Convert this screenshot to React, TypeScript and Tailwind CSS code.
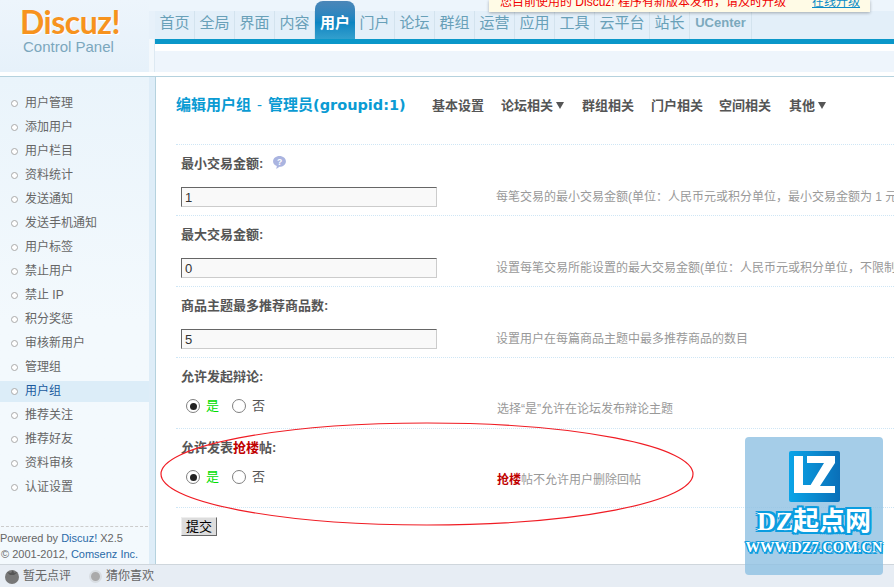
const cjk = "font-['Liberation_Sans','Noto_Sans_CJK_SC',sans-serif]";

const navItems = ["首页", "全局", "界面", "内容", "用户", "门户", "论坛", "群组", "运营", "应用", "工具"];
const sideItems = ["用户管理", "添加用户", "用户栏目", "资料统计", "发送通知", "发送手机通知", "用户标签", "禁止用户", "禁止 IP", "积分奖惩", "审核新用户", "管理组", "用户组", "推荐关注", "推荐好友", "资料审核", "认证设置"];
const tabs = [
  { label: "基本设置", w: "w-[69px]" },
  { label: "论坛相关", w: "w-[81px]", arrow: true },
  { label: "群组相关", w: "w-[69px]" },
  { label: "门户相关", w: "w-[68px]" },
  { label: "空间相关", w: "w-[70px]" },
  { label: "其他", w: "w-[40px]", arrow: true },
];

function NavLink({ label, active }: { label: string; active?: boolean }) {
  if (active) {
    return (
      <div className="w-[40px] h-[43px] -mt-[10px] rounded-t-[8px] bg-gradient-to-b from-[#4a86b8] via-[#0b85c2] to-[#3ba7d0] text-white font-bold flex items-start justify-center pt-[11px] text-[15px] leading-[22px]">
        {label}
      </div>
    );
  }
  return (
    <div className="w-[40px] h-[28px] border-r border-[#d3e3ee] text-[#68a0b8] text-center text-[15px] leading-[24px]">
      {label}
    </div>
  );
}

function Radio({ on }: { on?: boolean }) {
  return (
    <span className="w-[14px] h-[14px] rounded-full border-[1.5px] border-[#808080] bg-white flex items-center justify-center">
      {on && <span className="w-[7px] h-[7px] rounded-full bg-[#222]" />}
    </span>
  );
}

function InputRow({ label, value, desc, help }: { label: string; value: string; desc: string; help?: boolean }) {
  return (
    <div className="h-[71px] border-t border-dotted border-[#cfe6f5] pl-[5px] pt-[9px]">
      <div className="h-[19px] flex items-center text-[13px] font-bold text-[#555] leading-[19px]">
        {label}:
        {help && (
          <svg width="15" height="15" viewBox="0 0 14 14" className="ml-[9px] -mt-[3px]">
            <path d="M7 1c3.300 0 6 2.200 6 5s-2.700 5-6 5l-3 2 .5-2.700C2.400 9.500 1 8 1 6c0-2.800 2.700-5 6-5z" fill="#aab4e0" />
            <text x="7" y="9" fontSize="8" fontWeight="700" fill="#fff" textAnchor="middle">?</text>
          </svg>
        )}
      </div>
      <div className="mt-[14px] flex items-center h-[20px]">
        <div className="w-[256px] h-[20px] shrink-0 bg-[#f9f9f9] border-t border-l border-t-[#666] border-l-[#666] border-r border-b border-r-[#ccc] border-b-[#ccc] px-[3px] text-[13px] leading-[19px] text-[#333]">
          {value}
        </div>
        <div className="ml-[59px] w-[398px] overflow-hidden text-[12px] text-[#999] whitespace-nowrap">{desc}</div>
      </div>
    </div>
  );
}

function RadioRow({ label, desc, h }: { label: React.ReactNode; desc: React.ReactNode; h: string }) {
  return (
    <div className={`${h} border-t border-dotted border-[#cfe6f5] pl-[5px] pt-[9px]`}>
      <div className="h-[19px] flex items-center text-[13px] font-bold text-[#555] leading-[19px]">{label}:</div>
      <div className="mt-[10px] flex items-center h-[20px]">
        <div className="w-[316px] flex items-center pl-[5px] text-[13px] shrink-0">
          <Radio on />
          <span className="ml-[6px] w-[21px] text-[#00dd00]">是</span>
          <span className="ml-[5px]"><Radio /></span>
          <span className="ml-[6px] text-[#555]">否</span>
        </div>
        <div className="mt-[6px] text-[12px] text-[#999] whitespace-nowrap">{desc}</div>
      </div>
    </div>
  );
}

export default function App() {
  return (
    <div className={`${cjk} relative w-[894px] h-[587px] overflow-hidden bg-white flex flex-col`}>
      {/* top header */}
      <div className="h-[77px] shrink-0 flex border-b border-[#b5d2de] bg-white">
        <div className="w-[149px] h-[72px] shrink-0 bg-gradient-to-b from-[#edf5fc] to-[#e6f1fa] pl-[20px] pt-[5px]">
          <div className="w-fit text-[32px] leading-[34px] font-bold font-['Lato',sans-serif] text-[#f7931e] [text-shadow:1px_1px_0_#fff] tracking-[-0.5px]">Discuz!</div>
          <div className="text-[15px] leading-[16px] text-[#7ba7bd] pl-[3px]">Control Panel</div>
        </div>
        <div className="flex-1 min-w-0 flex flex-col">
          <div className="h-[11px] shrink-0 bg-[#edf5fc]" />
          <div className="h-[28px] shrink-0 bg-[#e3eff9] flex">
            <div className="w-[6px] h-full bg-[#e7f1fa]" />
            <div className="flex h-[28px]">
              {navItems.map((n) => (
                <NavLink key={n} label={n} active={n === "用户"} />
              ))}
              <div className="w-[55px] h-[28px] border-r border-[#d3e3ee] text-[#68a0b8] text-center text-[15px] leading-[24px]">云平台</div>
              <div className="w-[40px] h-[28px] border-r border-[#d3e3ee] text-[#68a0b8] text-center text-[15px] leading-[24px]">站长</div>
              <div className="w-[62px] h-[28px] border-r border-[#d3e3ee] text-[#7ba9bd] text-center text-[13px] font-bold leading-[24px]">UCenter</div>
            </div>
          </div>
          <div className="flex h-[33px]">
            <div className="w-[6px] bg-[#f3f8fc] border-r border-[#dde9f2]" />
            <div className="flex-1 flex flex-col">
              <div className="h-[5px] bg-[#0a97c9]" />
              <div className="h-[7px] bg-white" />
              <div className="flex-1 bg-[#eef5fc]" />
            </div>
          </div>
        </div>
      </div>

      {/* body */}
      <div className="flex-1 min-h-0 flex">
        <div className="w-[149px] shrink-0 bg-gradient-to-b from-[#eaf4fb] via-[#f3f9fd] to-[#f3f9fd] flex flex-col pt-[14px] relative">
          {sideItems.map((s) => (
            <div key={s} className="h-[24px] flex items-center">
              <div className={`w-full h-[21px] flex items-center pl-[11px] text-[12px] ${s === "用户组" ? "bg-[#dcedf8] text-[#1a5a9e]" : "text-[#666]"}`}>
                <span className="w-[7px] h-[7px] rounded-full border border-[#aaa] bg-white mr-[7px]" />
                {s}
              </div>
            </div>
          ))}
          <div className="mt-auto border-t border-dashed border-[#ccc] mx-[1px] pt-[3px] pb-[2px] text-[11px] leading-[16px] text-[#666] whitespace-nowrap">
            <div className="-ml-[1px]">Powered by <span className="text-[#2a6aa8]">Discuz!</span> X2.5</div>
            <div>© 2001-2012, <span className="text-[#2a6aa8]">Comsenz Inc.</span></div>
          </div>
        </div>
        <div className="w-[7px] shrink-0 bg-[#deedf8] border-r border-[#b5d2de]" />

        <div className="flex-1 min-w-0 overflow-hidden pl-[20px]">
          <div className="h-[67px] flex items-center whitespace-nowrap pb-[10px]">
            <div className="w-[256px] flex items-center text-[15px] font-bold text-[#0a9bd3]">
              <span>编辑用户组</span>
              <span className="ml-[6px] font-normal">-</span>
              <span className="ml-[6px]">管理员</span>
              <span className="font-['DejaVu_Sans',sans-serif] text-[14.500px]">(groupid:1)</span>
            </div>
            {tabs.map((t) => (
              <div key={t.label} className={`${t.w} shrink-0 text-[13px] font-bold text-[#555] flex items-center`}>
                {t.label}
                {t.arrow && <span className="ml-[3px] w-0 h-0 border-x-[4px] border-x-transparent border-t-[7px] border-t-[#555]" />}
              </div>
            ))}
          </div>
          <InputRow label="最小交易金额" value="1" help desc="每笔交易的最小交易金额(单位：人民币元或积分单位，最小交易金额为 1 元" />
          <InputRow label="最大交易金额" value="0" desc="设置每笔交易所能设置的最大交易金额(单位：人民币元或积分单位，不限制" />
          <InputRow label="商品主题最多推荐商品数" value="5" desc="设置用户在每篇商品主题中最多推荐商品的数目" />
          <RadioRow h="h-[71px]" label="允许发起辩论" desc="选择“是”允许在论坛发布辩论主题" />
          <RadioRow
            h="h-[79px]"
            label={<>允许发表<span className="text-[#c00000]">抢楼</span>帖</>}
            desc={<><b className="text-[#c00000]">抢楼</b>帖不允许用户删除回帖</>}
          />
          <div className="flex border-t border-dotted border-[#cfe6f5] pl-[5px] pt-[9px]">
            <button className="w-[36px] h-[19px] bg-[#ddd] border-t border-l border-t-[#eee] border-l-[#eee] border-r border-b border-r-[#666] border-b-[#666] text-[13px] leading-[16px] text-black">提交</button>
          </div>
        </div>
      </div>

      {/* bottom bar */}
      <div className="h-[23px] shrink-0 bg-[#e7edf4] border-t border-[#cfd6dc] flex items-center text-[12px] text-[#666]">
        <svg width="16" height="16" viewBox="0 0 16 16" className="ml-[4px]">
          <circle cx="8" cy="9" r="7" fill="#777" />
          <path d="M3 4l4 1 2-3 1 3 4-1-4 3H6z" fill="#555" />
        </svg>
        <span className="ml-[3px]">暂无点评</span>
        <span className="ml-[18px] w-[13px] h-[13px] rounded-full bg-[#aaa] border-[2px] border-[#d8dde2]" />
        <span className="ml-[4px]">猜你喜欢</span>
      </div>

      {/* upgrade notice */}
      <div className="absolute left-[489px] top-0 w-[381px] h-[12px] overflow-hidden bg-[#fffbe6] shadow-[0_1px_3px_rgba(0,0,0,0.3)] text-[12px] whitespace-nowrap">
        <div className="-mt-[7px] pl-[11px] leading-[18px]">
          <span className="text-[#f00000]">您目前使用的 Discuz! 程序有新版本发布，请及时升级</span>
          <span className="ml-[26px] text-[#0a8bc6] underline">在线升级</span>
        </div>
      </div>

      {/* hand drawn ellipse */}
      <svg className="absolute left-0 top-0 pointer-events-none" width="894" height="587">
        <ellipse cx="427" cy="474" rx="266" ry="51" fill="none" stroke="#f01c24" strokeWidth="1.2" />
      </svg>

      {/* watermark */}
      <div className="absolute left-[745px] top-[437px] w-[138px] h-[138px] rounded-[4px] bg-[#8fc0e2]/80 flex flex-col items-center pt-[14px]">
        <svg width="51" height="51" viewBox="0 0 51 51">
          <defs>
            <linearGradient id="lz" x1="0" y1="0" x2="1" y2="0">
              <stop offset="0" stopColor="#0aa5e8" />
              <stop offset="1" stopColor="#0a6fb8" />
            </linearGradient>
          </defs>
          <rect width="51" height="51" rx="2" fill="url(#lz)" />
          <path d="M5 5h9v29h9v8H5z" fill="#fff" />
          <path d="M18 5h28v7L31 35h15v7H21v-7l14-23H18z" fill="#fff" />
        </svg>
        <div className="mt-[5px] text-[26px] leading-[30px] font-bold text-white font-['Liberation_Serif','Noto_Sans_CJK_SC',serif] whitespace-nowrap [text-shadow:2px_0_0_#0a9de0,-2px_0_0_#0a9de0,0_2px_0_#0a9de0,0_-2px_0_#0a9de0,2px_2px_0_#0a9de0,-2px_-2px_0_#0a9de0,2px_-2px_0_#0a9de0,-2px_2px_0_#0a9de0]">DZ起点网</div>
        <div className="mt-[2px] text-[14.500px] leading-[16px] font-bold text-white font-['Liberation_Serif',serif] whitespace-nowrap [text-shadow:1.500px_0_0_#0a9de0,-1.500px_0_0_#0a9de0,0_1.500px_0_#0a9de0,0_-1.500px_0_#0a9de0,1.500px_1.500px_0_#0a9de0,-1.500px_-1.500px_0_#0a9de0]">WWW.DZ7.COM.CN</div>
      </div>
    </div>
  );
}
